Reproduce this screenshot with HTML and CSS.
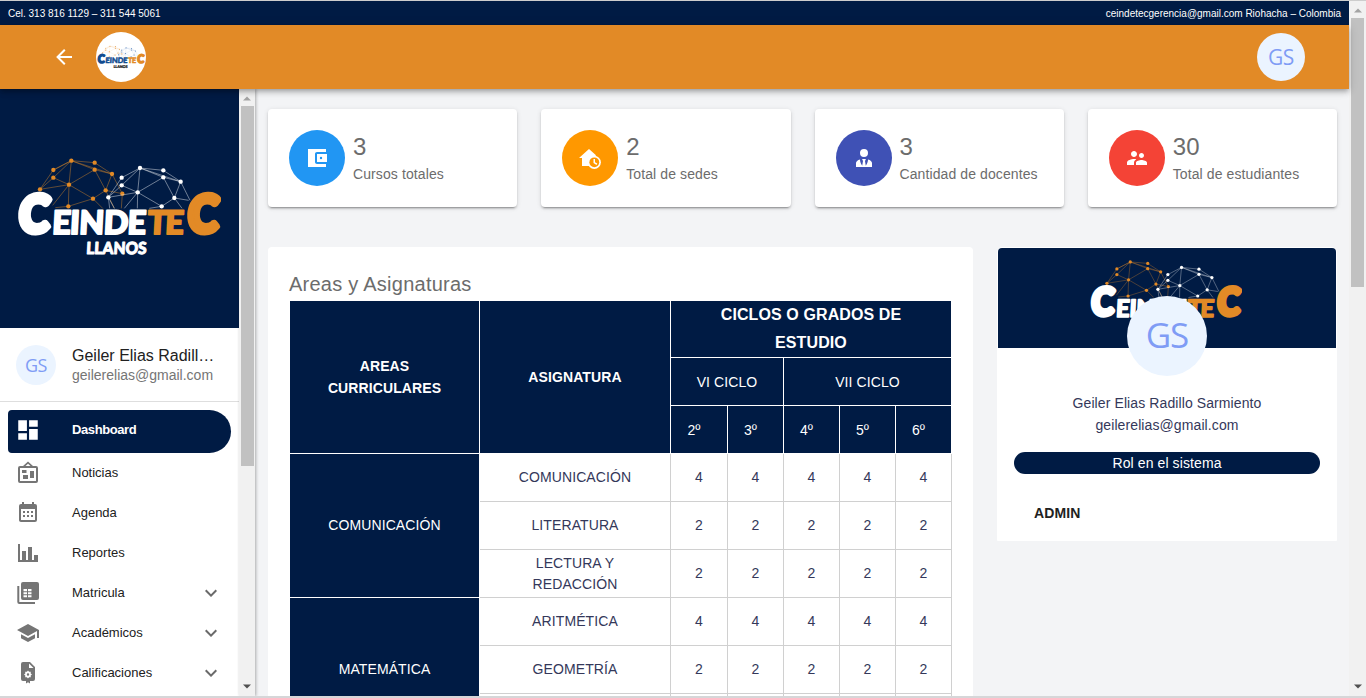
FILE: index.html
```html
<!DOCTYPE html>
<html lang="es">
<head>
<meta charset="utf-8">
<title>Ceindetec Llanos</title>
<link rel="stylesheet" href="styles.css">
</head>
<body>
<svg class="defs" aria-hidden="true">
  <symbol id="logo" viewBox="50 50 615 300">
    <g class="net net-a">
      <path d="M122 147L162 89L216 61L286 67L338 101L369 160L366 204M122 147L162 112L216 61L286 88L338 101L319 150L286 88L209 133L162 112M216 61L209 133L207 198L281 175L209 133L160 195M122 147L209 133M281 175L319 150L369 160M319 150L345 204M281 175L310 204M162 89L216 61L338 101M168 202L207 198"/>
      <g class="dots"><circle cx="122" cy="147" r="6.5"/><circle cx="162" cy="89" r="6.5"/><circle cx="162" cy="112" r="6.5"/><circle cx="216" cy="61" r="6.5"/><circle cx="286" cy="67" r="6.5"/><circle cx="286" cy="88" r="6.5"/><circle cx="338" cy="101" r="6.5"/><circle cx="209" cy="133" r="6.5"/><circle cx="319" cy="150" r="6.5"/><circle cx="369" cy="160" r="6.5"/><circle cx="281" cy="175" r="6.5"/><circle cx="207" cy="198" r="6.5"/></g>
    </g>
    <g class="net net-b">
      <path d="M327 171L367 112L422 83L492 90L544 124L572 180M327 171L367 135L422 83L492 111L544 124L525 173L492 111L415 156L367 135M422 83L415 156L414 204M415 156L487 198L525 173L568 180M327 171L415 156L375 204M327 171L331 204M327 171L345 204M525 173L548 204M487 198L450 204M422 83L544 124"/>
      <g class="dots"><circle cx="327" cy="171" r="6.5"/><circle cx="367" cy="112" r="6.5"/><circle cx="367" cy="135" r="6.5"/><circle cx="422" cy="83" r="6.5"/><circle cx="492" cy="90" r="6.5"/><circle cx="492" cy="111" r="6.5"/><circle cx="544" cy="124" r="6.5"/><circle cx="415" cy="156" r="6.5"/><circle cx="525" cy="173" r="6.5"/><circle cx="487" cy="198" r="6.5"/></g>
    </g>
    <g class="word">
      <text class="w-a big" transform="translate(57 276) skewX(-4)" textLength="90" lengthAdjust="spacingAndGlyphs">C</text>
      <text class="w-a mid" transform="translate(157 282) skewX(-3)" textLength="282" lengthAdjust="spacing">EINDE</text>
      <text class="w-b mid" transform="translate(444 282) skewX(-3)" textLength="108" lengthAdjust="spacing">TE</text>
      <text class="w-b big" transform="translate(564 276) skewX(-4)" textLength="90" lengthAdjust="spacingAndGlyphs">C</text>
      <text class="w-c small" transform="translate(260 342) skewX(-3)" textLength="181" lengthAdjust="spacingAndGlyphs">LLANOS</text>
    </g>
  </symbol>
  <symbol id="chev" viewBox="0 0 24 24"><path d="M7.41,8.58L12,13.17L16.59,8.58L18,10L12,16L6,10Z"/></symbol>
  <symbol id="up" viewBox="0 0 8 5"><path d="M0 4.500L4 .5L8 4.500Z"/></symbol>
  <symbol id="down" viewBox="0 0 8 5"><path d="M0 .5L4 4.500L8 .5Z"/></symbol>
</svg>
<div class="window">
  <div class="page">
    <div class="topbar"><span>Cel. 313 816 1129 – 311 544 5061</span><span>ceindetecgerencia@gmail.com Riohacha – Colombia</span></div>
    <header class="header">
      <svg class="back" viewBox="0 0 24 24"><path d="M20,11V13H8L13.5,18.5L12.08,19.92L4.16,12L12.08,4.08L13.5,5.5L8,11H20Z"/></svg>
      <div class="brand"><svg class="brand-logo"><use href="#logo"/></svg></div>
      <div class="avatar avatar-top">GS</div>
    </header>
    <div class="body">
      <aside class="sidebar">
        <div class="hero"><svg class="hero-logo"><use href="#logo"/></svg></div>
        <div class="user">
          <div class="avatar avatar-side">GS</div>
          <div class="user-text"><div class="user-name">Geiler Elias Radill…</div><div class="user-mail">geilerelias@gmail.com</div></div>
        </div>
        <nav class="menu">
          <a class="item active"><svg class="ico ico-lg" viewBox="0 0 24 24"><path d="M13,3V9H21V3M13,21H21V11H13M3,21H11V15H3M3,13H11V3H3V13Z"/></svg><span>Dashboard</span></a>
          <a class="item"><svg class="ico" viewBox="0 0 24 24"><path fill-rule="evenodd" d="M12 0.500L17 5H20A2 2 0 0 1 22 7V20A2 2 0 0 1 20 22H4A2 2 0 0 1 2 20V7A2 2 0 0 1 4 5H7ZM12 2.700L9.500 5H14.500ZM4 7V20H20V7ZM6 9H10.500V12H6ZM7 14H12V18H7ZM14 10H18V17H14Z"/></svg><span>Noticias</span></a>
          <a class="item"><svg class="ico cal" viewBox="0 0 24 24"><path d="M9,11V13H7V11H9M13,11V13H11V11H13M17,11V13H15V11H17M19,4A2,2 0 0,1 21,6V20A2,2 0 0,1 19,22H5C3.890,22 3,21.1 3,20V6A2,2 0 0,1 5,4H6V2H8V4H16V2H18V4H19M19,20V9H5V20H19M9,15V17H7V15H9M13,15V17H11V15H13M17,15V17H15V15H17Z"/></svg><span>Agenda</span></a>
          <a class="item"><svg class="ico" viewBox="0 0 24 24"><path d="M22,21H2V3H4V19H6V10H10V19H12V6H16V19H18V14H22V21Z"/></svg><span>Reportes</span></a>
          <a class="item"><svg class="ico" viewBox="0 0 24 24"><path fill-rule="evenodd" d="M7 1H21A2 2 0 0 1 23 3V17A2 2 0 0 1 21 19H7A2 2 0 0 1 5 17V3A2 2 0 0 1 7 1ZM7.500 8V10.200H11V8ZM12 8V10.200H15.500V8ZM7.500 11.200V13.200H11V11.200ZM12 11.200V13.200H15.500V11.200ZM7.500 14.200V16.200H11V14.200ZM12 14.200V16.200H15.500V14.200ZM1.300 5H3.300V21H19V23H3.300A2 2 0 0 1 1.300 21Z"/></svg><span>Matricula</span><svg class="chev"><use href="#chev"/></svg></a>
          <a class="item"><svg class="ico" viewBox="0 0 24 24"><path d="M12,3L1,9L12,15L21,10.09V17H23V9M5,13.18V17.18L12,21L19,17.18V13.18L12,17L5,13.18Z"/></svg><span>Académicos</span><svg class="chev"><use href="#chev"/></svg></a>
          <a class="item"><svg class="ico" viewBox="0 0 24 24"><path fill-rule="evenodd" d="M7 1H14L19 6V18A2 2 0 0 1 17 20H14V22.500L12 21.300L10 22.500V20H7A2 2 0 0 1 5 18V3A2 2 0 0 1 7 1ZM13 2.500V7H17.500ZM12 9.500L13.100 10.800L14.800 10.700L14.700 12.400L16 13.500L14.700 14.600L14.800 16.300L13.100 16.200L12 17.500L10.900 16.200L9.200 16.300L9.300 14.600L8 13.500L9.300 12.400L9.200 10.700L10.900 10.800ZM12 12.300A1.200 1.200 0 1 0 12 14.700A1.200 1.200 0 1 0 12 12.300Z"/></svg><span>Calificaciones</span><svg class="chev"><use href="#chev"/></svg></a>
        </nav>
      </aside>
      <div class="sbar sbar-side"><svg class="arr dim"><use href="#up"/></svg><div class="thumb"></div><svg class="arr end"><use href="#down"/></svg></div>
      <main class="main">
        <section class="stats">
          <div class="stat"><div class="disc blue"><svg viewBox="0 0 24 24"><path d="M21 18v3H3V3h18v3h-9c-1.110 0-2 .9-2 2v8c0 1.100.890 2 2 2h9zm-9-2h10V8H12v8zm4-2.800a1.200 1.200 0 1 1 0-2.400 1.200 1.200 0 0 1 0 2.400z"/></svg></div><div><div class="num">3</div><div class="lbl">Cursos totales</div></div></div>
          <div class="stat"><div class="disc amber"><svg viewBox="0 0 24 24"><path d="M11 3L1 12H4V20H12L18 9.300Z"/><circle cx="16.300" cy="16.300" r="6.600"/><circle class="clock" cx="16.300" cy="16.300" r="4.900"/><path d="M15.500 13V17.100L18.500 18.900L19.300 17.600L17 16.300V13Z"/></svg></div><div><div class="num">2</div><div class="lbl">Total de sedes</div></div></div>
          <div class="stat"><div class="disc indigo"><svg viewBox="0 0 24 24"><path d="M12 3A4 4 0 0 1 16 7A4 4 0 0 1 12 11A4 4 0 0 1 8 7A4 4 0 0 1 12 3M16 13.540C16 14.600 15.720 17.070 13.810 19.830L13 15L13.940 13.120C13.320 13.050 12.670 13 12 13S10.680 13.050 10.060 13.120L11 15L10.190 19.830C8.280 17.070 8 14.600 8 13.540C5.610 14.240 4 15.500 4 17V21H20V17C20 15.500 18.400 14.240 16 13.540Z"/></svg></div><div><div class="num">3</div><div class="lbl">Cantidad de docentes</div></div></div>
          <div class="stat"><div class="disc red"><svg viewBox="0 0 24 24"><path d="M16.500 12c1.380 0 2.490-1.120 2.490-2.500S17.880 7 16.500 7C15.120 7 14 8.120 14 9.500s1.120 2.500 2.500 2.500zM9 11c1.660 0 2.990-1.340 2.990-3S10.660 5 9 5C7.340 5 6 6.340 6 8s1.340 3 3 3zm7.500 3c-1.830 0-5.500.920-5.500 2.750V19h11v-2.250c0-1.830-3.670-2.750-5.500-2.750zM9 13c-2.330 0-7 1.170-7 3.500V19h7v-2.250c0-.850.330-2.340 2.370-3.470C10.500 13.100 9.660 13 9 13z"/></svg></div><div><div class="num">30</div><div class="lbl">Total de estudiantes</div></div></div>
        </section>
        <section class="panels">
          <div class="areas">
            <h2 class="title">Areas y Asignaturas</h2>
            <div class="grid">
              <div class="th strong tall pad">AREAS CURRICULARES</div>
              <div class="th strong tall">ASIGNATURA</div>
              <div class="th strong wide">CICLOS O GRADOS DE ESTUDIO</div>
              <div class="th span2">VI CICLO</div><div class="th span3">VII CICLO</div>
              <div class="th deg">2º</div><div class="th deg">3º</div><div class="th deg">4º</div><div class="th deg">5º</div><div class="th deg">6º</div>
              <div class="th area">COMUNICACIÓN</div>
              <div class="td">COMUNICACIÓN</div><div class="td">4</div><div class="td">4</div><div class="td">4</div><div class="td">4</div><div class="td">4</div>
              <div class="td">LITERATURA</div><div class="td">2</div><div class="td">2</div><div class="td">2</div><div class="td">2</div><div class="td">2</div>
              <div class="td name">LECTURA Y REDACCIÓN</div><div class="td">2</div><div class="td">2</div><div class="td">2</div><div class="td">2</div><div class="td">2</div>
              <div class="th area">MATEMÁTICA</div>
              <div class="td">ARITMÉTICA</div><div class="td">4</div><div class="td">4</div><div class="td">4</div><div class="td">4</div><div class="td">4</div>
              <div class="td">GEOMETRÍA</div><div class="td">2</div><div class="td">2</div><div class="td">2</div><div class="td">2</div><div class="td">2</div>
              <div class="td"></div><div class="td"></div><div class="td"></div><div class="td"></div><div class="td"></div><div class="td"></div>
            </div>
          </div>
          <div class="profile">
            <div class="cover"><svg class="cover-logo"><use href="#logo"/></svg></div>
            <div class="avatar avatar-card">GS</div>
            <div class="who">Geiler Elias Radillo Sarmiento<br>geilerelias@gmail.com</div>
            <div class="role">Rol en el sistema</div>
            <div class="admin">ADMIN</div>
          </div>
        </section>
      </main>
    </div>
  </div>
  <div class="sbar sbar-page"><svg class="arr dim"><use href="#up"/></svg><div class="thumb"></div><svg class="arr end"><use href="#down"/></svg></div>
</div>
<div class="edge"></div>
</body>
</html>
```
FILE: styles.css
```css
* { box-sizing: border-box; }
body {
  margin: 0; width: 1366px; height: 698px; overflow: hidden;
  display: flex; flex-direction: column;
  border-top: 1px solid #cdcdcd;
  font: 14px/22px "Liberation Sans", Arial, sans-serif;
  letter-spacing: .1px; color: #34385a;
  --navy: #001b44; --orange: #e28a26;
}
.defs { display: none; }
.window { display: flex; height: 695px; overflow: hidden; }
.page { width: 1349px; display: flex; flex-direction: column; background: #f3f4f6; }
.edge { height: 2px; background: #d6d6d8; }

.topbar { height: 24px; flex: none; display: flex; justify-content: space-between; padding: 1px 8px 0; background: var(--navy); color: #fff; font-size: 10px; line-height: 24px; letter-spacing: 0; }
.header { height: 64px; flex: none; display: flex; align-items: center; padding: 0 44px 0 52px; background: var(--orange); position: relative; z-index: 2; box-shadow: 0 2px 4px -1px rgba(0,0,0,.2), 0 4px 5px rgba(0,0,0,.14), 0 1px 10px rgba(0,0,0,.12); }
.back { width: 24px; height: 24px; fill: #fff; }
.brand { width: 50px; height: 50px; margin-left: 20px; border-radius: 50%; background: #fff; display: flex; align-items: center; justify-content: center; --la: #e9a04f; --lb: #5b86bd; --wa: #114b8f; --wb: #e28a26; --wc: #111; }
.brand-logo { width: 48px; height: 26px; }
.avatar { display: flex; align-items: center; justify-content: center; border-radius: 50%; background: #ebf4ff; color: #7f9cf5; font-family: "Open Sans", sans-serif; letter-spacing: -.5px; flex: none; }
.avatar-top { width: 48px; height: 48px; margin-left: auto; font-size: 21px; }

/* wordmark */
.net path { fill: none; stroke-width: 2; opacity: .65; }
.net-a { stroke: var(--la, #e28a26); fill: var(--la, #e28a26); }
.net-b { stroke: var(--lb, #fff); fill: var(--lb, #fff); }
.dots { stroke: none; }
.word { font-family: Lato, sans-serif; font-weight: 900; letter-spacing: 0; stroke-linejoin: round; }
.w-a { fill: var(--wa, #fff); stroke: var(--wa, #fff); }
.w-b { fill: var(--wb, #e28a26); stroke: var(--wb, #e28a26); }
.w-c { fill: var(--wc, #fff); stroke: var(--wc, #fff); }
.big { font-size: 152px; stroke-width: 19px; }
.mid { font-size: 97px; stroke-width: 6px; }
.small { font-size: 50px; stroke-width: 3px; }

.body { flex: 1; min-height: 0; display: flex; }
.sidebar { width: 239px; flex: none; background: #fff; overflow: hidden; letter-spacing: 0; }
.hero { height: 239px; display: flex; justify-content: center; padding: 68px 2px 0 0; background: var(--navy); }
.hero-logo { width: 205px; height: 100px; overflow: visible; }
.user { height: 74px; display: flex; align-items: center; padding: 0 16px; border-bottom: 1px solid #dedede; }
.avatar-side { width: 40px; height: 40px; font-size: 18px; margin-right: 16px; }
.user-text { width: 151px; line-height: 19px; padding-top: 2px; }
.user-name { font-size: 16px; line-height: 20px; color: #212121; white-space: nowrap; }
.user-mail { color: #757575; }
.menu { padding: 8px 8px 0; }
.item { height: 40px; display: flex; align-items: center; padding: 0 8px; font-size: 13px; color: #212121; }
.item span { margin-left: 32px; }
.active { height: 43px; background: var(--navy); color: #fff; border-radius: 4px 22px 22px 4px; padding-bottom: 3px; font-weight: bold; letter-spacing: -.4px; }
.ico { width: 24px; height: 24px; fill: #757575; flex: none; }
.cal { margin-bottom: 2px; }
.ico-lg { width: 26px; height: 26px; margin: 0 -1px; fill: #fff; }
.chev { width: 24px; height: 24px; margin-left: auto; fill: #6a6a6a; }

.sbar { background: #f1f1f1; display: flex; flex-direction: column; align-items: center; flex: none; }
.thumb { background: #c1c1c1; width: 13px; }
.arr { width: 8px; height: 5px; fill: #505050; }
.dim { fill: #a3a3a3; }
.end { margin-top: auto; }
.sbar-side { width: 16px; padding: 7px 0 7px; box-shadow: 1px 0 3px rgba(0,0,0,.3); }
.sbar-side .thumb { height: 360px; margin-top: 5px; }
.sbar-page { width: 17px; padding: 7px 0 7px; }
.sbar-page .thumb { height: 269px; margin-top: 5px; }

.main { flex: 1; min-width: 0; padding: 20px 12px 0 13px; overflow: hidden; }
.stats { display: grid; grid-template-columns: repeat(4, 1fr); gap: 24px; }
.stat { height: 98px; display: flex; align-items: center; gap: 8px; padding-left: 21px; background: #fff; border-radius: 4px; box-shadow: 0 3px 1px -2px rgba(0,0,0,.2), 0 2px 2px rgba(0,0,0,.14), 0 1px 5px rgba(0,0,0,.12); color: #6c6c6c; }
.disc { width: 56px; height: 56px; border-radius: 50%; display: flex; align-items: center; justify-content: center; }
.disc svg { width: 24px; height: 24px; fill: #fff; }
.blue { background: #2196f3; } .amber { background: #ff9800; } .indigo { background: #3f51b5; } .red { background: #f44336; }
.disc .clock { fill: #ff9800; }
.num { font-size: 24px; line-height: 32px; }
.lbl { line-height: 22px; }
.panels { display: flex; align-items: flex-start; gap: 24px; margin-top: 40px; }
.areas { width: 705px; background: #fff; border-radius: 4px 4px 0 0; padding: 21px 21px 0 22px; }
.title { margin: 0 0 0 -1px; height: 33px; font-size: 20px; line-height: 32px; font-weight: normal; color: #6c6c6c; letter-spacing: .25px; }
.grid { display: grid; width: 662px; grid-template-columns: 190px 191px 57px 56px 56px 56px 56px; grid-template-rows: 57px; grid-auto-rows: 48px; text-align: center; }
.th, .td { display: flex; align-items: center; justify-content: center; border: solid #d0d0d0; border-width: 0 1px 1px 0; }
.td { padding-bottom: 2px; }
.th { background: var(--navy); color: #fff; border-color: #fff; }
.strong { font-weight: bold; }
.tall { grid-row: span 3; }
.pad { padding: 0 36px; }
.wide { grid-column: span 5; font-size: 16px; line-height: 28px; padding: 0 40px; }
.span2 { grid-column: span 2; } .span3 { grid-column: span 3; }
.deg { padding-right: 10px; }
.area { grid-row: span 3; padding-bottom: 2px; }
.name { padding: 0 40px; line-height: 21px; }
.profile { width: 340px; height: 294px; background: #fff; border: 1px solid #fff; border-radius: 5px 5px 0 0; display: flex; flex-direction: column; text-align: center; }
.cover { height: 100px; background: var(--navy); border-radius: 4px 4px 0 0; display: flex; justify-content: center; padding: 11px 3px 0 0; }
.cover-logo { width: 153px; height: 75px; overflow: visible; }
.avatar-card { width: 80px; height: 80px; margin: -52px auto 0; font-size: 35px; letter-spacing: -1px; padding-bottom: 2px; z-index: 1; }
.who { margin-top: 16px; }
.role { margin: 16px 16px 0; height: 22px; border-radius: 11px; background: var(--navy); color: #fff; }
.admin { text-align: left; margin: 28px 0 0 36px; font-weight: bold; color: #212121; letter-spacing: .1px; }
```
